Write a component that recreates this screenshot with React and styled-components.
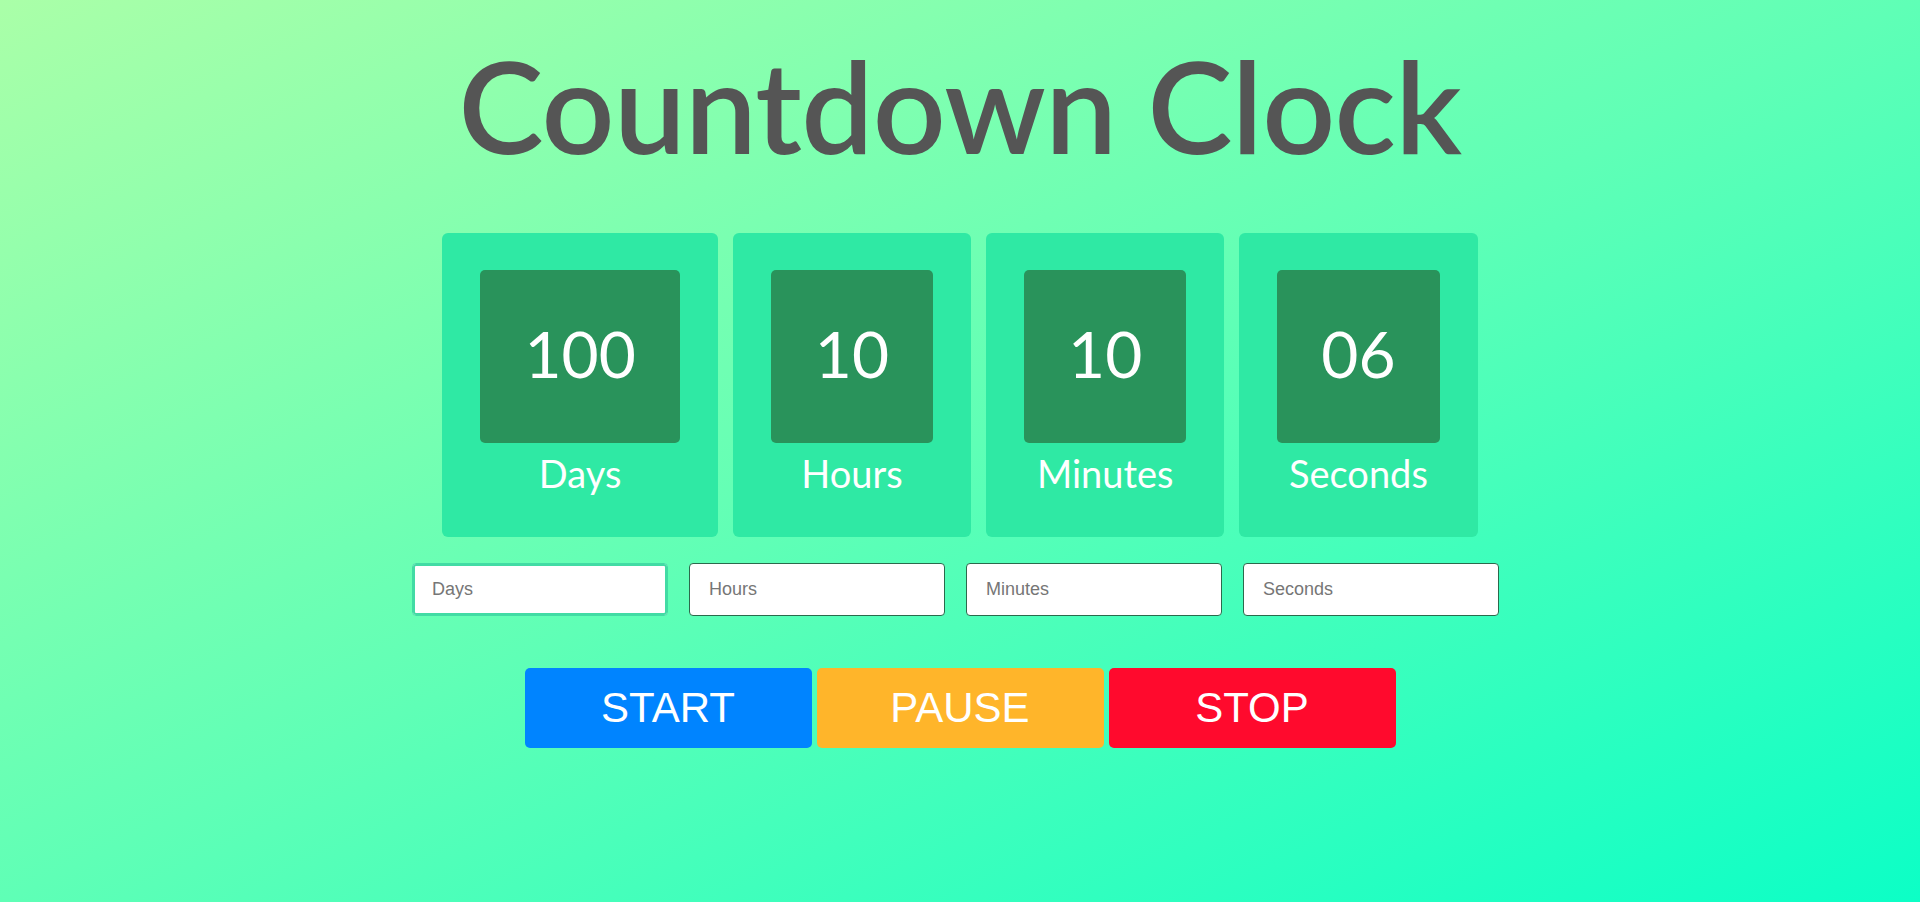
import React, { useState } from 'react';
import styled, { createGlobalStyle } from 'styled-components';

const GlobalStyle = createGlobalStyle`
  * {
    box-sizing: border-box;
  }

  html, body {
    margin: 0;
    padding: 0;
  }

  body {
    min-height: 100vh;
    background: linear-gradient(to bottom right, #aaffa8, #5fffb6, #0cffc6);
    font-family: Lato, "Open Sans", sans-serif;
    overflow: hidden;
  }
`;

const Page = styled.div`
  min-height: 100vh;
  display: flex;
  flex-direction: column;
  align-items: center;
  padding-top: 29px;
`;

const Title = styled.h1`
  margin: 0;
  font-family: Lato, "Open Sans", sans-serif;
  font-weight: 600;
  font-size: 128px;
  line-height: 152px;
  letter-spacing: -0.7px;
  color: #555555;
`;

const CardRow = styled.div`
  display: flex;
  gap: 15px;
  margin-top: 52px;
`;

const Card = styled.div`
  display: flex;
  flex-direction: column;
  align-items: center;
  padding: 37px 38px 41px;
  background-color: #2fe9a4;
  border-radius: 6px;
`;

const NumberBox = styled.div`
  padding: 45px 44px 51px;
  background-color: #29935b;
  border-radius: 5px;
  color: #ffffff;
  font-size: 64px;
  line-height: 77px;
  font-weight: 400;
`;

const Label = styled.div`
  margin-top: 7px;
  color: #ffffff;
  font-size: 38px;
  line-height: 46px;
`;

const InputRow = styled.div`
  display: flex;
  gap: 21px;
  margin-top: 26px;
  padding-right: 9px;
`;

const TimeInput = styled.input`
  width: 256px;
  height: 53px;
  padding: 0 19px;
  border: 1px solid ${(p) => (p.$active ? '#42dba4' : '#2b6a4c')};
  border-radius: 4px;
  box-shadow: ${(p) => (p.$active ? 'inset 0 0 0 2px #42dba4' : 'none')};
  background: #ffffff;
  font-family: "Liberation Sans", Arial, sans-serif;
  font-size: 18px;
  color: #333;
  outline: none;

  &::placeholder {
    color: #767676;
  }
`;

const ButtonRow = styled.div`
  display: flex;
  gap: 5px;
  margin-top: 52px;
`;

const ActionButton = styled.button`
  width: 287px;
  height: 80px;
  border: none;
  border-radius: 5px;
  background-color: ${(p) => p.$color};
  color: #ffffff;
  font-family: "Liberation Sans", Arial, sans-serif;
  font-size: 42px;
  cursor: pointer;
`;

const units = [
  { key: 'days', label: 'Days', value: '100' },
  { key: 'hours', label: 'Hours', value: '10' },
  { key: 'minutes', label: 'Minutes', value: '10' },
  { key: 'seconds', label: 'Seconds', value: '06' },
];

const buttons = [
  { label: 'START', color: '#0084ff' },
  { label: 'PAUSE', color: '#ffb52a' },
  { label: 'STOP', color: '#ff0a2d' },
];

const App = () => {
  const [values, setValues] = useState({ days: '', hours: '', minutes: '', seconds: '' });
  const [active, setActive] = useState('days');

  const handleChange = (key) => (e) => {
    setValues({ ...values, [key]: e.target.value });
  };

  return (
    <>
      <GlobalStyle />
      <Page>
        <Title>Countdown Clock</Title>
        <CardRow>
          {units.map((u) => (
            <Card key={u.key}>
              <NumberBox>{u.value}</NumberBox>
              <Label>{u.label}</Label>
            </Card>
          ))}
        </CardRow>
        <InputRow>
          {units.map((u) => (
            <TimeInput
              key={u.key}
              type="number"
              placeholder={u.label}
              value={values[u.key]}
              $active={active === u.key}
              onFocus={() => setActive(u.key)}
              onChange={handleChange(u.key)}
            />
          ))}
        </InputRow>
        <ButtonRow>
          {buttons.map((b) => (
            <ActionButton key={b.label} $color={b.color}>
              {b.label}
            </ActionButton>
          ))}
        </ButtonRow>
      </Page>
    </>
  );
};

export default App;
